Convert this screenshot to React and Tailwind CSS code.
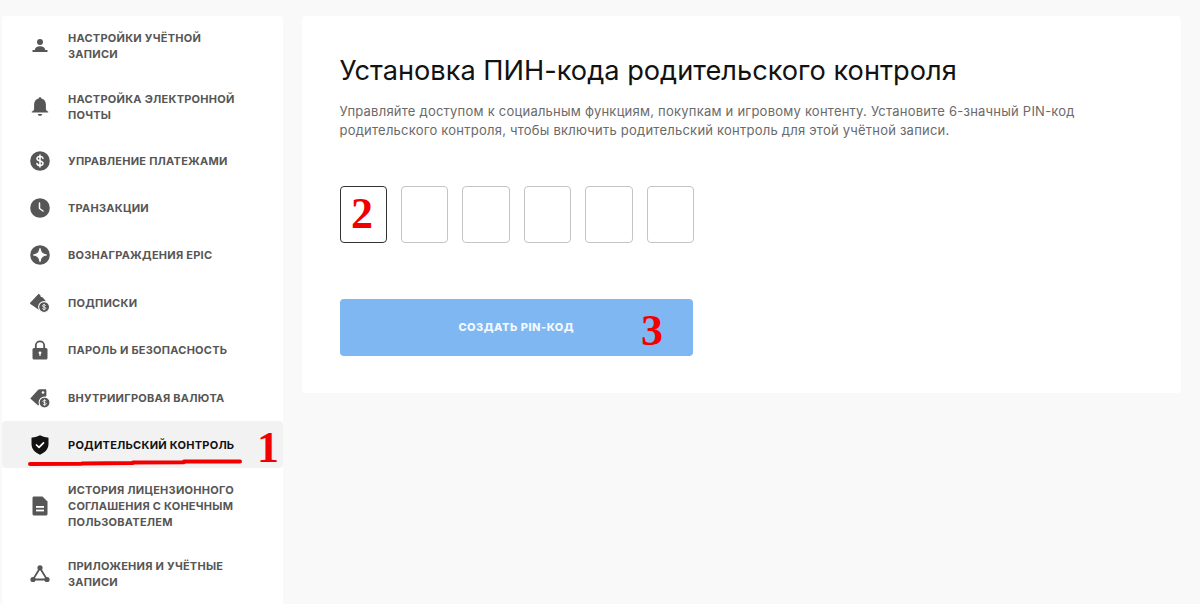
const Person = () => (
  <svg viewBox="0 0 20 20" className="w-5 h-5 fill-current">
    <circle cx="10" cy="6" r="3" />
    <path d="M4.800 14c0-2.300 2.200-3.800 5.200-3.800s5.200 1.500 5.200 3.800z" />
    <rect x="2.500" y="14" width="15" height="2" rx="0.300" />
  </svg>
);

const Bell = () => (
  <svg viewBox="0 0 20 20" className="w-5 h-5 fill-current">
    <path d="M10 0.300c0.800 0 1.300 0.500 1.300 1.300 2.900 0.600 4.600 3 4.600 6v4.400c0 1.200 1 2 2 2.500 0.700 0.300 0.500 1-0.200 1H2.300c-0.700 0-0.900-0.700-0.200-1 1-0.500 2-1.300 2-2.500V7.600c0-3 1.700-5.400 4.600-6 0-0.800 0.500-1.300 1.300-1.300z" />
    <path d="M7.800 17h4.400c-0.200 1.200-1.100 2-2.200 2s-2-0.800-2.200-2z" />
  </svg>
);

const Dollar = () => (
  <svg viewBox="0 0 20 20" className="w-5 h-5">
    <circle cx="10" cy="10" r="9.800" fill="currentColor" />
    <path d="M13 7.400c-0.300-1.200-1.500-1.900-3-1.900-1.700 0-3 0.900-3 2.200 0 3 6 1.600 6 4.500 0 1.400-1.300 2.300-3 2.300-1.600 0-2.800-0.800-3.100-2M10 4v12" fill="none" stroke="#fff" strokeWidth="1.500" strokeLinecap="round" />
  </svg>
);

const Clock = () => (
  <svg viewBox="0 0 20 20" className="w-5 h-5">
    <circle cx="10" cy="10" r="9.800" fill="currentColor" />
    <path d="M9.500 5v5.500l3.500 2.500" fill="none" stroke="#fff" strokeWidth="1.500" strokeLinecap="round" strokeLinejoin="round" />
  </svg>
);

const Star = () => (
  <svg viewBox="0 0 20 20" className="w-5 h-5">
    <circle cx="10" cy="10" r="9.800" fill="currentColor" />
    <path d="M10 3.500c0.500 4 2.500 6 6.500 6.500-4 0.500-6 2.500-6.500 6.500-0.500-4-2.500-6-6.500-6.500 4-0.500 6-2.500 6.500-6.500z" fill="#fff" stroke="#fff" strokeWidth="1.200" strokeLinejoin="round" />
  </svg>
);

const Ticket = () => (
  <svg viewBox="0 0 22 22" className="w-[22px] h-[22px]">
    <path d="M0.500 10.500 9.500 0.800l2 1.800c-0.400 1 0.800 2.200 1.800 1.800l2.200 2.100 2 2.500-2 2-5 6.500-0.800 0.800-9.300-6.200c-0.500-0.500-0.300-1.200-0.400-1.600z" fill="currentColor" />
    <circle cx="15.500" cy="15.500" r="6" fill="currentColor" stroke="#fff" strokeWidth="1.200" />
    <path d="M17.300 14c-0.200-0.700-1-1.100-1.800-1.100-1 0-1.800 0.500-1.800 1.300 0 1.700 3.700 0.900 3.700 2.600 0 0.800-0.800 1.300-1.900 1.300-1 0-1.700-0.500-1.900-1.200M15.500 12v7" fill="none" stroke="#fff" strokeWidth="0.900" />
  </svg>
);

const Tag = () => (
  <svg viewBox="0 0 22 22" className="w-[22px] h-[22px]">
    <path d="M0.300 11.500 9 2c0.500-0.500 1-0.700 1.700-0.700h6c0.800 0 1.300 0.600 1.300 1.300v6l-8 10c-0.500 0.500-1.200 0.500-1.700 0l-8-7.100z" fill="currentColor" />
    <circle cx="14.300" cy="5" r="1.400" fill="#fff" />
    <circle cx="16" cy="16" r="6" fill="currentColor" stroke="#fff" strokeWidth="1.200" />
    <path d="M17.800 14.500c-0.200-0.700-1-1.100-1.800-1.100-1 0-1.800 0.500-1.800 1.300 0 1.700 3.700 0.900 3.700 2.600 0 0.800-0.800 1.300-1.900 1.300-1 0-1.700-0.500-1.900-1.200M16 12.500v7" fill="none" stroke="#fff" strokeWidth="0.900" />
  </svg>
);

const Lock = () => (
  <svg viewBox="0 0 20 20" className="w-5 h-5">
    <path d="M5.800 9V5.500a4.200 4.200 0 0 1 8.400 0V9" fill="none" stroke="currentColor" strokeWidth="1.800" />
    <rect x="2.500" y="8" width="15" height="11.500" rx="1.500" fill="currentColor" />
    <circle cx="10" cy="12.800" r="1.400" fill="#fff" />
    <rect x="9.400" y="13" width="1.200" height="3" fill="#fff" />
  </svg>
);

const Shield = () => (
  <svg viewBox="0 0 20 20" className="w-5 h-5">
    <path d="M10 0.300c2.200 1.200 5 2 8 2.300 0.300 0 0.500 0.200 0.500 0.500v6c0 5-3.500 8.500-8.500 10.600-5-2.100-8.500-5.600-8.500-10.600v-6c0-0.300 0.200-0.500 0.500-0.500 3-0.300 5.800-1.100 8-2.300z" fill="currentColor" />
    <path d="M6.500 10l2.500 2.400 4.500-4.600" fill="none" stroke="#fff" strokeWidth="1.700" strokeLinecap="round" strokeLinejoin="round" />
  </svg>
);

const Doc = () => (
  <svg viewBox="0 0 20 20" className="w-5 h-5">
    <path d="M4 0.500h8.500l5 5v12.500c0 0.900-0.700 1.500-1.500 1.500H4c-0.800 0-1.500-0.600-1.500-1.500V2c0-0.800 0.700-1.500 1.500-1.500z" fill="currentColor" />
    <rect x="6" y="10" width="8" height="1.800" fill="#fff" />
    <rect x="6" y="13.600" width="8" height="1.800" fill="#fff" />
  </svg>
);

const Nodes = () => (
  <svg viewBox="0 0 20 20" className="w-5 h-5">
    <path d="M10 4 3 15.500h14z" fill="none" stroke="currentColor" strokeWidth="1.800" />
    <circle cx="10" cy="3.800" r="2.600" fill="currentColor" />
    <circle cx="3" cy="15.500" r="2.600" fill="currentColor" />
    <circle cx="17" cy="15.500" r="2.600" fill="currentColor" />
  </svg>
);

const items = [
  { label: "Настройки учётной записи", icon: Person, h: "h-[60px]" },
  { label: "Настройка электронной почты", icon: Bell, h: "h-[61px]" },
  { label: "Управление платежами", icon: Dollar, h: "h-[47.4px]" },
  { label: "Транзакции", icon: Clock, h: "h-[47.4px]" },
  { label: "Вознаграждения Epic", icon: Star, h: "h-[47.4px]" },
  { label: "Подписки", icon: Ticket, h: "h-[47.4px]" },
  { label: "Пароль и безопасность", icon: Lock, h: "h-[47.4px]" },
  { label: "Внутриигровая валюта", icon: Tag, h: "h-[47.4px]" },
  { label: "Родительский контроль", icon: Shield, h: "h-[47px]", active: true },
  { label: "История лицензионного соглашения с конечным пользователем", icon: Doc, h: "h-[76px]" },
  { label: "Приложения и учётные записи", icon: Nodes, h: "h-[60px]" },
];

const SideItem = ({ item }) => {
  const Icon = item.icon;
  return (
    <div
      className={`flex items-center pl-7 pr-10 rounded ${item.h} ${
        item.active ? "bg-[#f2f2f2] text-[#121212]" : "text-[#565656]"
      }`}
    >
      <span className="w-5 h-5 mr-[18px] shrink-0 flex items-center justify-center">
        <Icon />
      </span>
      <span className="uppercase text-[11px] leading-4 font-bold tracking-[0.25px]">
        {item.label}
      </span>
    </div>
  );
};

const Mark = ({ className, children }) => (
  <span
    className={`absolute font-bold text-[#f20000] text-[44px] leading-none font-['Liberation_Serif',serif] ${className}`}
  >
    {children}
  </span>
);

export default function App() {
  return (
    <div className="h-[604px] overflow-hidden bg-[#f9f9f9] font-['Inter',sans-serif] flex items-start pl-0.5 pt-4 gap-[19px]">
      <nav className="relative w-[281px] h-[600px] shrink-0 bg-white rounded">
        {items.map((item) => (
          <SideItem key={item.label} item={item} />
        ))}
        <svg viewBox="0 0 214 8" className="absolute left-[26px] top-[443px] w-[214px] h-2">
          <path d="M2 5 54 4.800 54 4.400 105 4 105 3.600 156 3.200 156 2.600 212 2.500" fill="none" stroke="#f20000" strokeWidth="4" strokeLinecap="round" strokeLinejoin="round" />
        </svg>
        <Mark className="left-[255px] top-[410px]">1</Mark>
      </nav>
      <main className="relative w-[879px] h-[377px] shrink-0 bg-white rounded pl-[37.5px] pt-9">
        <h1 className="text-[27.2px] leading-[38px] text-[#121212] font-normal">
          Установка ПИН-кода родительского контроля
        </h1>
        <p className="mt-3 w-[780px] text-[13px] leading-[19px] tracking-[0.23px] text-[#6a6a6a]">
          Управляйте доступом к социальным функциям, покупкам и игровому контенту. Установите 6-значный PIN-код родительского контроля, чтобы включить родительский контроль для этой учётной записи.
        </p>
        <div className="flex gap-[14.3px] mt-[46px]">
          {[0, 1, 2, 3, 4, 5].map((n) => (
            <div
              key={n}
              className={`w-[47.2px] h-[57px] rounded border-[1.5px] ${
                n === 0 ? "border-[#333333]" : "border-[#c4c4c4]"
              }`}
            />
          ))}
        </div>
        <button className="mt-[56px] w-[353.5px] h-[57px] rounded bg-[#7fb7f2] text-[#f4f9fe] uppercase text-[11px] font-extrabold tracking-[0.5px]">
          Создать PIN-код
        </button>
        <Mark className="left-[49px] top-[176px]">2</Mark>
        <Mark className="left-[339px] top-[293px]">3</Mark>
      </main>
    </div>
  );
}
